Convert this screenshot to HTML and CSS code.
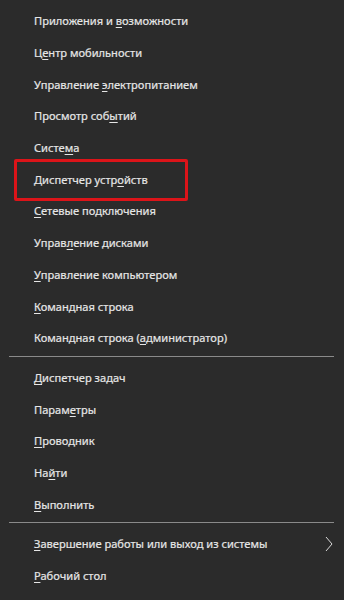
FILE: index.html
```html
<!DOCTYPE html>
<html lang="ru">
<head>
  <meta charset="UTF-8" />
  <meta name="viewport" content="width=device-width, initial-scale=1.0"/>
  <title>Меню Win+X</title>
  <link rel="stylesheet" href="styles.css">
</head>
<body>

  <!-- Контекстное меню кнопки Пуск -->
  <div class="menu">
    <div class="item"><span>Приложения и <u>в</u>озможности</span></div>
    <div class="item"><span>Ц<u>е</u>нтр мобильности</span></div>
    <div class="item"><span>Управление <u>э</u>лектропитанием</span></div>
    <div class="item"><span>Просмотр соб<u>ы</u>тий</span></div>
    <div class="item"><span>Систе<u>м</u>а</span></div>
    <div class="item item-marked"><span>Диспетчер устр<u>о</u>йств</span></div>
    <div class="item"><span><u>С</u>етевые подключения</span></div>
    <div class="item"><span>Управ<u>л</u>ение дисками</span></div>
    <div class="item"><span><u>У</u>правление компьютером</span></div>
    <div class="item"><span><u>К</u>омандная строка</span></div>
    <div class="item"><span>Командная строка (<u>а</u>дминистратор)</span></div>

    <div class="separator"></div>

    <div class="item"><span><u>Д</u>испетчер задач</span></div>
    <div class="item"><span>Парам<u>е</u>тры</span></div>
    <div class="item"><span><u>П</u>роводник</span></div>
    <div class="item"><span>На<u>й</u>ти</span></div>
    <div class="item"><span><u>В</u>ыполнить</span></div>

    <div class="separator"></div>

    <div class="item item-sub">
      <span><u>З</u>авершение работы или выход из системы</span>
      <svg class="chevron" width="8" height="16" viewBox="0 0 8 16">
        <path d="M1 1 L7 8 L1 15" fill="none" stroke="#d8d8d8" stroke-width="1"/>
      </svg>
    </div>
    <div class="item"><span><u>Р</u>абочий стол</span></div>
  </div>

</body>
</html>
```

FILE: styles.css
```css
* {
  box-sizing: border-box;
}

html, body {
  margin: 0;
  padding: 0;
  height: 100%;
  background: #2b2b2b;
  font-family: "Noto Sans", "Open Sans", sans-serif;
  color: #e6e6e6;
}

.menu {
  display: flex;
  flex-direction: column;
  padding-top: 5px;
}

.item {
  position: relative;
  height: 31.7px;
  display: flex;
  align-items: center;
  padding-left: 34px;
  font-size: 11.1px;
  white-space: nowrap;
  -webkit-text-stroke: 0.2px #e6e6e6;
}

.item u {
  text-decoration-thickness: 1px;
  text-underline-offset: 2px;
}

/* красная рамка вокруг выделенного пункта */
.item-marked::after {
  content: "";
  position: absolute;
  left: 14px;
  top: -4px;
  width: 168px;
  height: 36px;
  border: 3px solid #dc1419;
  border-radius: 2px;
}

.item-sub {
  justify-content: space-between;
  padding-right: 11px;
}

.chevron {
  display: block;
}

.separator {
  height: 1px;
  margin: 2px 10px 5px 9px;
  background: #8a8a8a;
}
```
